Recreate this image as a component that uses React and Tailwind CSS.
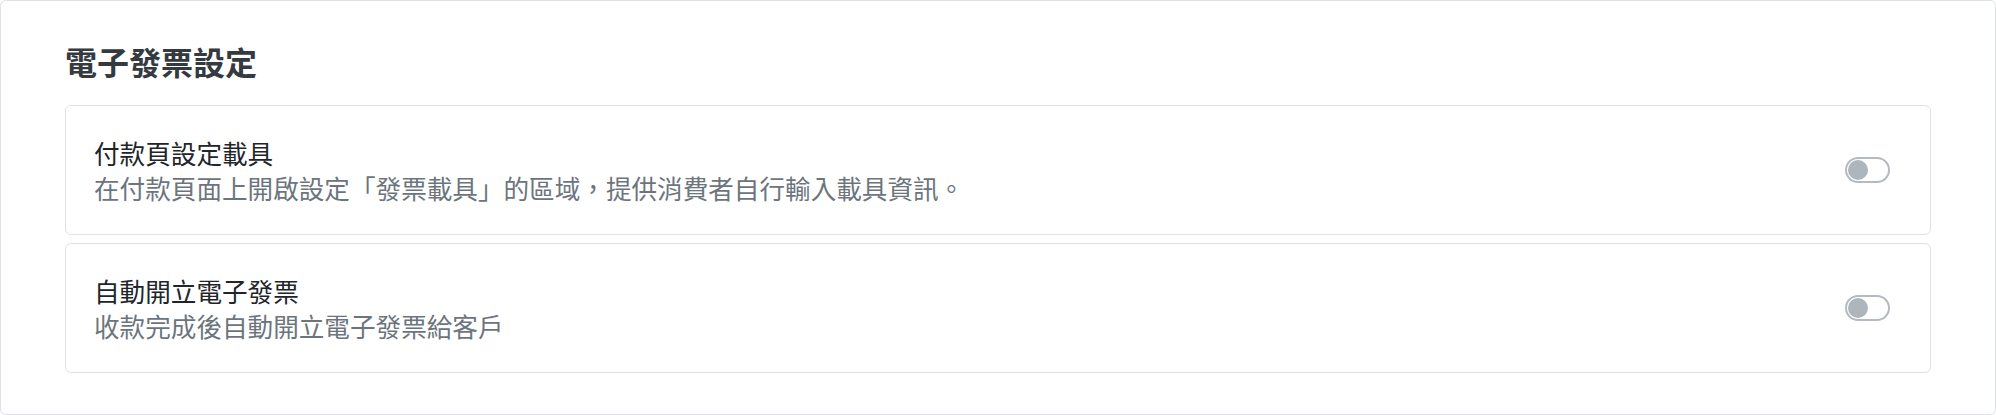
import { useState } from 'react'

const settings = [
  {
    id: 'carrier',
    title: '付款頁設定載具',
    desc: '在付款頁面上開啟設定「發票載具」的區域，提供消費者自行輸入載具資訊。',
  },
  {
    id: 'auto-issue',
    title: '自動開立電子發票',
    desc: '收款完成後自動開立電子發票給客戶',
  },
]

function Toggle({ on, onChange }) {
  return (
    <button
      type="button"
      onClick={onChange}
      className={`flex h-[26px] w-[45px] shrink-0 items-center rounded-full border-2 px-[1px] ${
        on ? 'justify-end border-[#0d6efd] bg-[#0d6efd]' : 'justify-start border-[#b4bac1] bg-white'
      }`}
    >
      <span className={`block h-[20px] w-[20px] rounded-full ${on ? 'bg-white' : 'bg-[#adb5bd]'}`} />
    </button>
  )
}

function App() {
  const [enabled, setEnabled] = useState({})

  return (
    <div
      className="h-[415px] w-full rounded-md border border-[#dee2e6] bg-white px-16 pt-10"
      style={{ fontFamily: '"Noto Sans CJK TC", "Noto Sans", sans-serif' }}
    >
      <h2 className="mb-6 text-[32px] font-bold leading-10 text-[#343a40]">電子發票設定</h2>

      <div className="flex flex-col gap-2">
        {settings.map((s) => (
          <div
            key={s.id}
            className="flex h-[130px] items-center justify-between rounded-md border border-[#dee2e6] pl-7 pr-10"
          >
            <div className="text-[25.6px] leading-[35px]">
              <div className="text-[#212529]">{s.title}</div>
              <div className="text-[#6c757d]">{s.desc}</div>
            </div>
            <Toggle
              on={!!enabled[s.id]}
              onChange={() => setEnabled({ ...enabled, [s.id]: !enabled[s.id] })}
            />
          </div>
        ))}
      </div>
    </div>
  )
}

export default App
